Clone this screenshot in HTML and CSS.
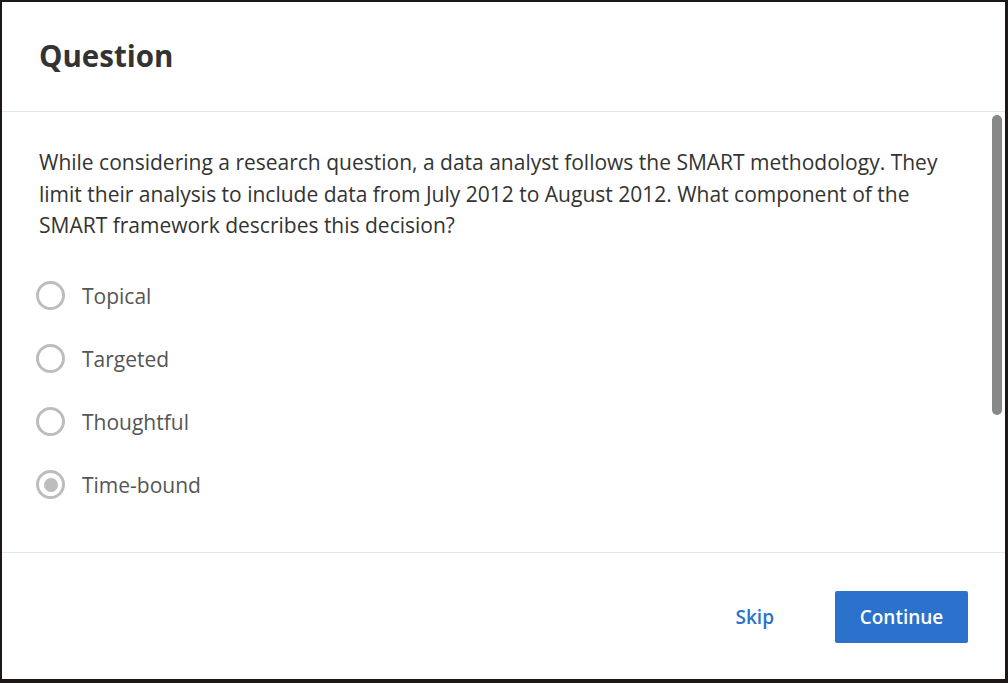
FILE: index.html
```html
<!DOCTYPE html>
<html>
<head>
<meta charset="utf-8">
<link rel="stylesheet" href="styles.css">
</head>
<body>
<div class="modal">
  <header class="modal-header">
    <h1 class="title">Question</h1>
  </header>
  <section class="modal-body">
    <p class="prompt">While considering a research question, a data analyst follows the SMART methodology. They limit their analysis to include data from July 2012 to August 2012. What component of the SMART framework describes this decision?</p>
    <div class="options">
      <label class="option"><span class="radio"></span><span class="label">Topical</span></label>
      <label class="option"><span class="radio"></span><span class="label">Targeted</span></label>
      <label class="option"><span class="radio"></span><span class="label">Thoughtful</span></label>
      <label class="option"><span class="radio checked"></span><span class="label">Time-bound</span></label>
    </div>
    <div class="scroll-thumb"></div>
  </section>
  <footer class="modal-footer">
    <button class="btn-link">Skip</button>
    <button class="btn-primary">Continue</button>
  </footer>
</div>
</body>
</html>
```

FILE: styles.css
```css
html, body {
  margin: 0;
  height: 100%;
}
body {
  background: #1d1815;
  padding: 2px 3px 4px 2px;
  box-sizing: border-box;
  font-family: "Open Sans", "Liberation Sans", sans-serif;
}
.modal {
  background: #fff;
  height: 100%;
  display: flex;
  flex-direction: column;
}
.modal-header {
  height: 109px;
  border-bottom: 1px solid #e6e6e6;
  display: flex;
  align-items: center;
  padding: 0 37px;
}
.title {
  margin: 0 0 2px 0;
  font-size: 29.5px;
  font-weight: 700;
  color: #333;
}
.modal-body {
  position: relative;
  flex: 1;
  padding: 35px 60px 0 37px;
  border-bottom: 1px solid #e6e6e6;
}
.prompt {
  margin: 0 0 38px 0;
  font-size: 21px;
  line-height: 31.5px;
  color: #333;
}
.options {
  display: flex;
  flex-direction: column;
  gap: 31px;
}
.option {
  display: flex;
  align-items: center;
  gap: 17px;
  height: 32px;
  margin-left: -3px;
}
.radio {
  width: 29px;
  height: 29px;
  flex: none;
  box-sizing: border-box;
  border: 3px solid #bdbdbd;
  border-radius: 50%;
  display: flex;
  align-items: center;
  justify-content: center;
}
.radio.checked::after {
  content: "";
  width: 14px;
  height: 14px;
  border-radius: 50%;
  background: #bdbdbd;
}
.label {
  font-size: 21px;
  color: #555;
}
.scroll-thumb {
  position: absolute;
  right: 3px;
  top: 3px;
  width: 10px;
  height: 300px;
  border-radius: 5px;
  background: #888;
}
.modal-footer {
  height: 126px;
  display: flex;
  align-items: center;
  justify-content: flex-end;
  padding: 2px 37px 0 37px;
  gap: 41px;
  box-sizing: border-box;
}
.btn-link {
  background: none;
  border: none;
  font-family: inherit;
  font-size: 19px;
  font-weight: 600;
  color: #2a72cc;
  padding: 0 20px;
  height: 52px;
}
.btn-primary {
  font-family: inherit;
  font-size: 19px;
  font-weight: 600;
  color: #fff;
  background: #2a72cc;
  border: none;
  border-radius: 2px;
  width: 133px;
  height: 52px;
}
```
